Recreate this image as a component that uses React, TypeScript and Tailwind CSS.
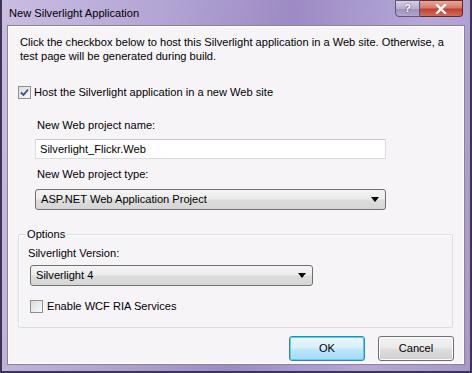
import React from "react";

function Check({ checked }: { checked: boolean }) {
  return (
    <div className="w-[13px] h-[13px] border border-[#8e8f8f] bg-gradient-to-br from-[#dcdcdc] to-[#fafafa] flex items-center justify-center shrink-0">
      {checked && (
        <svg width="9" height="9" viewBox="0 0 9 9">
          <path d="M1 4.5 L3.5 7 L8 1.5" stroke="#3a4a8a" strokeWidth="1.8" fill="none" />
        </svg>
      )}
    </div>
  );
}

function Select({ value, className }: { value: string; className: string }) {
  return (
    <div
      className={
        "h-[21px] border border-[#707070] rounded-[3px] bg-[linear-gradient(#f4f4f4_0%,#ececec_45%,#dcdcdc_55%,#d6d6d6_100%)] flex items-center pl-[5px] pr-[6px] " +
        className
      }
    >
      <span className="flex-1">{value}</span>
      <svg width="8" height="5" viewBox="0 0 8 5">
        <path d="M0 0 H8 L4 5 Z" fill="#000" />
      </svg>
    </div>
  );
}

export default function App() {
  return (
    <div
      className="w-[472px] h-[373px] relative flex flex-col border-l-2 border-r-2 border-b-2 border-[#3e3550] bg-[linear-gradient(100deg,#c9bde2_0%,#b3a5d4_30%,#9c8bc4_55%,#b5a7d8_80%,#a797cc_100%)] text-[11.1px] text-black whitespace-nowrap"
      style={{ fontFamily: '"Liberation Sans", Arial, sans-serif' }}
    >
      {/* title bar */}
      <div className="h-[23px] flex items-start shrink-0 relative">
        <div className="pl-[7px] pt-[5px] text-[11.1px] text-black">New Silverlight Application</div>
        <div className="absolute right-[7px] top-0 flex">
          <div className="w-[25px] h-[17px] rounded-bl-[4px] border border-[#5e5578] bg-[linear-gradient(#d7d0e6_0%,#b8aed0_50%,#9e92bb_51%,#b1a6cc_100%)] flex items-center justify-center text-white font-bold text-[11px] [text-shadow:0_0_2px_#333]">
            ?
          </div>
          <div className="w-[43px] h-[17px] rounded-br-[4px] border border-l-0 border-[#5e2a2a] bg-[linear-gradient(#e8a89a_0%,#d47a6a_45%,#c0402e_55%,#d66c58_100%)] flex items-center justify-center">
            <svg width="12" height="10" viewBox="0 0 12 10">
              <path d="M2 1 L10 9 M10 1 L2 9" stroke="#fff" strokeWidth="2.4" strokeLinecap="square" />
            </svg>
          </div>
        </div>
      </div>

      {/* client area */}
      <div className="mx-[5px] mt-[2px] h-[340px] border border-[#8b80a0] bg-[#f7f4f8] flex flex-col shadow-[inset_0_0_0_1px_#ffffff]">
        <div className="pl-[12px] pt-[9px] leading-[14px]">
          <div>Click the checkbox below to host this Silverlight application in a Web site. Otherwise, a</div>
          <div>test page will be generated during build.</div>
        </div>

        <div className="flex items-center gap-[3px] pl-[10px] mt-[22px] leading-[14px]">
          <Check checked={true} />
          <span>Host the Silverlight application in a new Web site</span>
        </div>

        <div className="pl-[29px] mt-[19px] leading-[14px]">New Web project name:</div>
        <div className="ml-[27px] mt-[7px] w-[351px] h-[20px] border border-[#dcdcdc] border-t-[#c8c8c8] bg-white flex items-center pl-[4px]">
          Silverlight_Flickr.Web
        </div>

        <div className="pl-[29px] mt-[8px] leading-[14px]">New Web project type:</div>
        <Select value="ASP.NET Web Application Project" className="ml-[27px] mt-[8px] w-[351px]" />

        <div className="relative ml-[10px] mt-[24px] w-[435px] h-[94px] border border-[#d5dfe5] rounded-[2px] shadow-[inset_1px_1px_0_#ffffff]">
          <div className="absolute -top-[8px] left-[6px] px-[2px] bg-[#f7f4f8] leading-[14px]">Options</div>
          <div className="pl-[9px] pt-[11px] leading-[14px]">Silverlight Version:</div>
          <Select value="Silverlight 4" className="ml-[11px] mt-[5px] w-[283px]" />
          <div className="flex items-center gap-[4px] ml-[11px] mt-[13px] leading-[14px]">
            <Check checked={false} />
            <span>Enable WCF RIA Services</span>
          </div>
        </div>

        <div className="flex justify-end gap-[13px] pr-[10px] mt-[8px]">
          <div className="w-[76px] h-[25px] rounded-[3px] border border-[#3c7fb1] shadow-[inset_0_0_0_1px_#48d8fb] bg-[linear-gradient(#eaf6fd_0%,#d9f0fc_45%,#bee6fd_55%,#a7d9f5_100%)] flex items-center justify-center">
            OK
          </div>
          <div className="w-[76px] h-[25px] rounded-[3px] border border-[#707070] shadow-[inset_0_0_0_1px_#fcfcfc] bg-[linear-gradient(#f2f2f2_0%,#ebebeb_45%,#dddddd_55%,#cfcfcf_100%)] flex items-center justify-center">
            Cancel
          </div>
        </div>
      </div>
    </div>
  );
}
